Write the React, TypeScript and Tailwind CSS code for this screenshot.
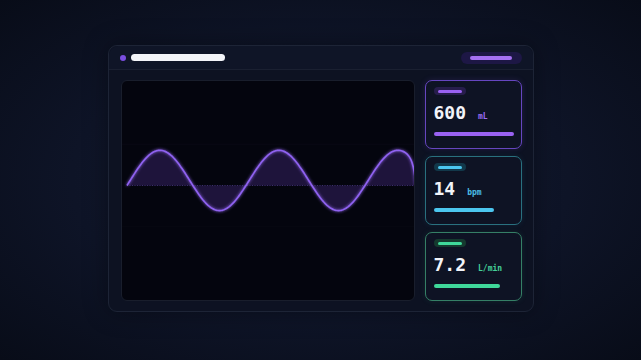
import React from "react";

const OX = 121;
const OY = 81;

function buildWave() {
  const P = 119;
  const phi = -0.1676;
  const pts: string[] = [];
  for (let x = 126; x <= 404; x += 1) {
    const t = (2 * Math.PI * (x - 126)) / P + phi;
    const y = 180 - 30 * Math.sin(t);
    pts.push(`${(x - OX).toFixed(2)},${(y - OY).toFixed(2)}`);
  }
  let d = "M" + pts.join(" L");
  d += ` C${410 - OX},${156 - OY} ${413 - OX},${164 - OY} ${415 - OX},${185 - OY}`;
  return d;
}

const wave = buildWave();
const fill = wave + ` L${126 - OX},${185 - OY} Z`;

function Chart() {
  return (
    <div className="relative flex-1 overflow-hidden rounded-[6px] border border-[#191e2c] bg-[#04050e]">
      <svg className="absolute inset-0 h-full w-full" viewBox="0 0 292 218" preserveAspectRatio="none">
        <defs>
          <filter id="glow" x="-10%" y="-30%" width="120%" height="160%">
            <feGaussianBlur stdDeviation="1.6" result="b" />
            <feMerge>
              <feMergeNode in="b" />
              <feMergeNode in="SourceGraphic" />
            </feMerge>
          </filter>
        </defs>
        <line x1="0" y1="63" x2="292" y2="63" stroke="#080914" strokeWidth="1" />
        <line x1="0" y1="145" x2="292" y2="145" stroke="#070812" strokeWidth="1" />
        <path d={fill} fill="#7b4fe0" fillOpacity="0.22" />
        <line x1={126 - OX} y1={185 - OY} x2={415 - OX} y2={185 - OY} stroke="#3b2d6b" strokeWidth="1" strokeDasharray="1 1.5" />
        <path d={wave} fill="none" stroke="#8f62f0" strokeWidth="1.7" strokeLinejoin="round" filter="url(#glow)" />
      </svg>
    </div>
  );
}

type CardProps = {
  value: string;
  unit: string;
  border: string;
  pillBg: string;
  accent: string;
  unitColor: string;
  barW: string;
  shadow: string;
};

function Card({ value, unit, border, pillBg, accent, unitColor, barW, shadow }: CardProps) {
  return (
    <div className={`flex flex-1 flex-col rounded-[7px] border bg-[#0e1324] pl-[8px] pr-[8px] pt-[6px] ${border} ${shadow}`}>
      <div className={`flex h-[8px] w-[32px] items-center justify-center rounded-full ${pillBg}`}>
        <div className={`h-[3px] w-[24px] rounded-full ${accent}`} />
      </div>
      <div className="mt-[9px] flex items-baseline font-['DejaVu_Sans_Mono',monospace] leading-[18px]">
        <span className="text-[18px] font-bold text-[#f2f4fa]">{value}</span>
        <span className={`ml-3 text-[8px] font-bold ${unitColor}`}>{unit}</span>
      </div>
      <div className={`mt-[6px] h-[4px] rounded-full ${accent} ${barW}`} />
    </div>
  );
}

export default function App() {
  return (
    <div className="flex h-[360px] w-[641px] justify-center bg-[radial-gradient(ellipse_at_50%_50%,#141c31_0%,#0e1427_55%,#080c18_100%)] pt-[45px]">
      <div className="flex h-[267px] w-[426px] flex-col rounded-[9px] border border-[#1d2436] bg-[#0d1222] shadow-[0_0_24px_rgba(0,0,0,0.35)]">
        <div className="flex h-[24px] items-center rounded-t-[9px] border-b border-[#1a2031] bg-[#0f1527] pl-[11px] pr-[11px]">
          <div className="h-[6px] w-[6px] rounded-full bg-[#7a4ee0]" />
          <div className="ml-[5px] h-[6.5px] w-[94px] rounded-full bg-[#f4f5f9]" />
          <div className="ml-auto flex h-[12px] w-[61px] items-center justify-center rounded-full bg-[#1d1745]">
            <div className="h-[4px] w-[42px] rounded-full bg-[#a571f2]" />
          </div>
        </div>
        <div className="flex flex-1 gap-[10px] pb-[10px] pl-[12px] pr-[11px] pt-[10px]">
          <Chart />
          <div className="flex w-[97px] flex-col gap-[7px]">
            <Card
              value="600"
              unit="mL"
              border="border-[#6646c0]"
              pillBg="bg-[#271d4c]"
              accent="bg-[#9a62f2]"
              unitColor="text-[#9a6cf0]"
              barW="w-[80px]"
              shadow="shadow-[0_0_6px_rgba(124,77,220,0.18)]"
            />
            <Card
              value="14"
              unit="bpm"
              border="border-[#29707f]"
              pillBg="bg-[#12384a]"
              accent="bg-[#4cc6ef]"
              unitColor="text-[#4cbde6]"
              barW="w-[60px]"
              shadow="shadow-[0_0_6px_rgba(60,180,220,0.1)]"
            />
            <Card
              value="7.2"
              unit="L/min"
              border="border-[#357f66]"
              pillBg="bg-[#153a2f]"
              accent="bg-[#3fd89a]"
              unitColor="text-[#45cf98]"
              barW="w-[66px]"
              shadow="shadow-[0_0_6px_rgba(60,210,150,0.1)]"
            />
          </div>
        </div>
      </div>
    </div>
  );
}
